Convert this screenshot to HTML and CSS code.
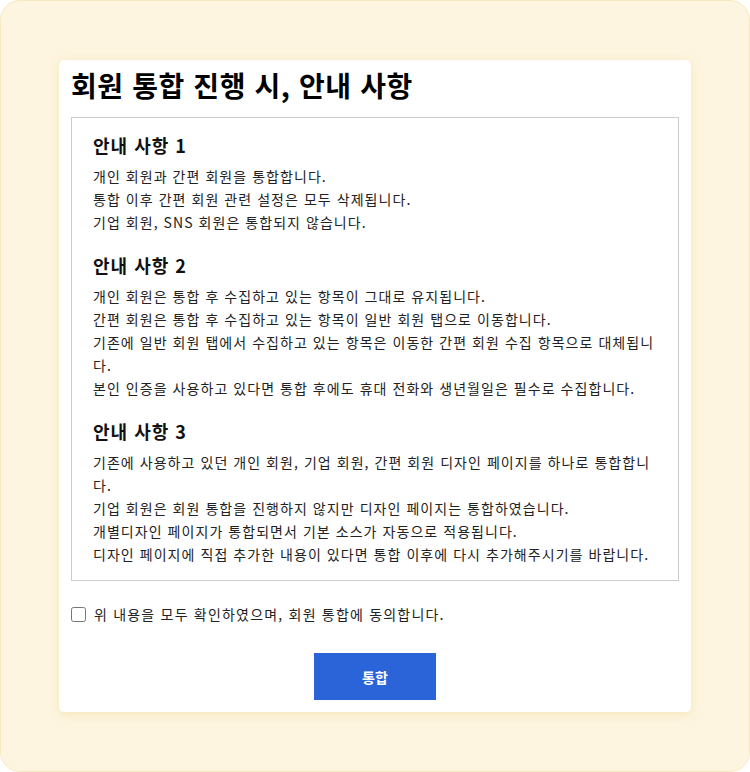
FILE: index.html
```html
<!DOCTYPE html>
<html lang="ko">
<head>
  <meta charset="utf-8">
  <title>회원 통합</title>
  <link rel="stylesheet" href="styles.css">
</head>
<body>
  <div class="frame">
    <div class="card">
      <h1 class="title">회원 통합 진행 시, 안내 사항</h1>
      <div class="notice">
        <div class="section">
          <h3>안내 사항 1</h3>
          <p>개인 회원과 간편 회원을 통합합니다.</p>
          <p>통합 이후 간편 회원 관련 설정은 모두 삭제됩니다.</p>
          <p>기업 회원, SNS 회원은 통합되지 않습니다.</p>
        </div>
        <div class="section">
          <h3>안내 사항 2</h3>
          <p>개인 회원은 통합 후 수집하고 있는 항목이 그대로 유지됩니다.</p>
          <p>간편 회원은 통합 후 수집하고 있는 항목이 일반 회원 탭으로 이동합니다.</p>
          <p>기존에 일반 회원 탭에서 수집하고 있는 항목은 이동한 간편 회원 수집 항목으로 대체됩니다.</p>
          <p>본인 인증을 사용하고 있다면 통합 후에도 휴대 전화와 생년월일은 필수로 수집합니다.</p>
        </div>
        <div class="section">
          <h3>안내 사항 3</h3>
          <p>기존에 사용하고 있던 개인 회원, 기업 회원, 간편 회원 디자인 페이지를 하나로 통합합니다.</p>
          <p>기업 회원은 회원 통합을 진행하지 않지만 디자인 페이지는 통합하였습니다.</p>
          <p>개별디자인 페이지가 통합되면서 기본 소스가 자동으로 적용됩니다.</p>
          <p>디자인 페이지에 직접 추가한 내용이 있다면 통합 이후에 다시 추가해주시기를 바랍니다.</p>
        </div>
      </div>
      <label class="agree">
        <input type="checkbox" id="agree">
        <span>위 내용을 모두 확인하였으며, 회원 통합에 동의합니다.</span>
      </label>
      <div class="actions">
        <button id="mergeBtn">통합</button>
      </div>
    </div>
  </div>
</body>
</html>
```

FILE: styles.css
```css
body {
  margin: 0;
  padding: 0;
  font-family: "Noto Sans CJK KR", "Noto Sans", sans-serif;
  color: #222;
}

.frame {
  box-sizing: border-box;
  width: 750px;
  height: 772px;
  padding: 59px 59px 0 58px;
  background-color: #fdf5df;
  border: 1px solid #f6e9c2;
  border-radius: 20px;
}

.card {
  box-sizing: border-box;
  width: 632px;
  height: 652px;
  padding: 4px 12px 12px;
  background-color: #fff;
  border-radius: 5px;
  box-shadow: 0 2px 8px rgba(240, 215, 150, 0.5);
}

.title {
  margin: 0 0 11px;
  font-size: 28px;
  font-weight: 700;
  line-height: 42px;
  letter-spacing: 0.6px;
  color: #000;
}

.notice {
  border: 1px solid #ccc;
  padding: 13px 17px 14px 21px;
}

.section + .section {
  margin-top: 17px;
}

.section h3 {
  margin: 0 0 5px;
  font-size: 18px;
  font-weight: 700;
  line-height: 29px;
  letter-spacing: 1px;
  color: #111;
}

.section p {
  margin: 0;
  font-size: 14px;
  line-height: 23px;
  letter-spacing: 1.05px;
}

.agree {
  display: flex;
  align-items: center;
  gap: 8px;
  margin-top: 23px;
  font-size: 14px;
  line-height: 20px;
  letter-spacing: 1.2px;
}

.agree input {
  width: 15px;
  height: 15px;
  margin: 0;
}

.actions {
  display: flex;
  justify-content: center;
  margin-top: 29px;
}

.actions button {
  width: 122px;
  height: 47px;
  border: none;
  background-color: #2b63d9;
  color: #fff;
  font-family: inherit;
  font-size: 14px;
  font-weight: 700;
  cursor: pointer;
}
```
